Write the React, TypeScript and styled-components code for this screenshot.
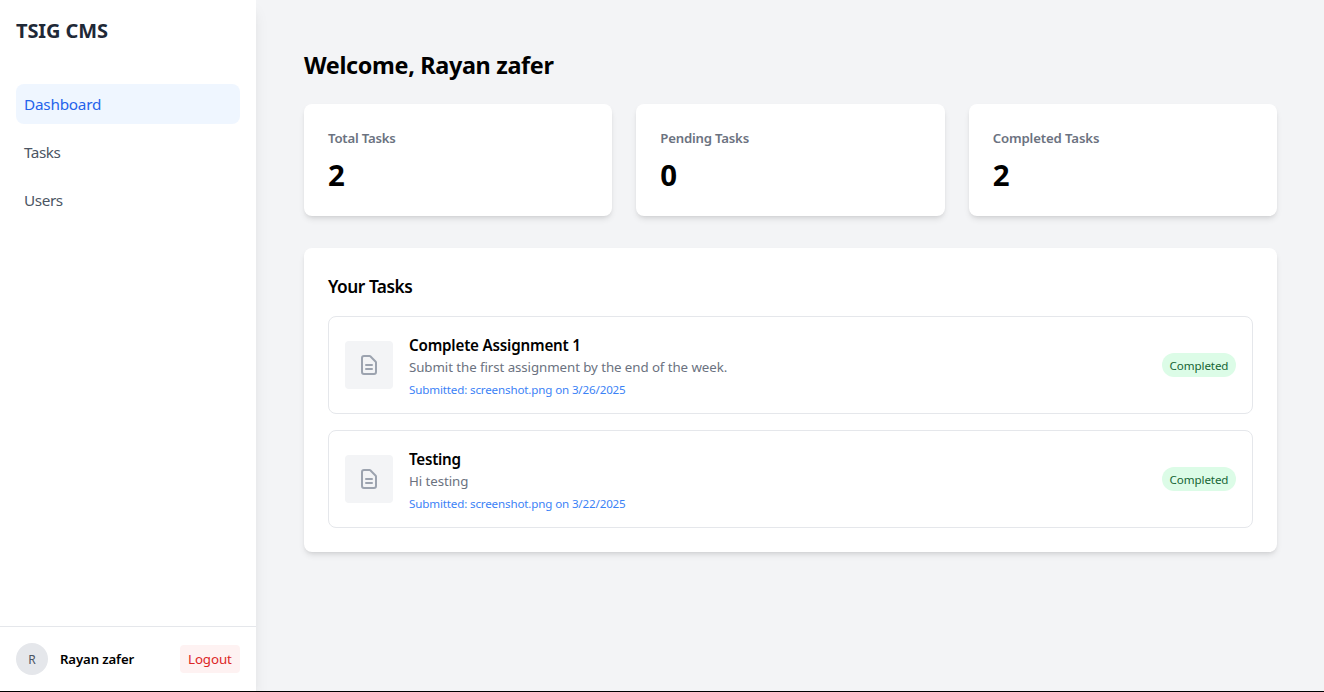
import React from 'react';
import styled, { createGlobalStyle } from 'styled-components';

const GlobalStyle = createGlobalStyle`
  *, *::before, *::after { box-sizing: border-box; }
  body { margin: 0; background: #f3f4f6; overflow: hidden; }
  h1, h2, h3, p { margin: 0; }
  button { border: 0; font: inherit; cursor: pointer; }
`;

const Shell = styled.div`
  display: flex;
  height: 692px;
  border-bottom: 1px solid #000;
  background: #f3f4f6;
  color: #000;
  font-family: 'Segoe UI', 'Noto Sans', sans-serif;
  font-size: 16px;
  font-weight: 400;
  line-height: 24px;
`;

const Sidebar = styled.aside`
  display: flex;
  flex-direction: column;
  flex: 0 0 256px;
  background: #fff;
  box-shadow: 0 10px 15px -3px rgba(0, 0, 0, 0.1), 0 4px 6px -4px rgba(0, 0, 0, 0.1);
`;

const Text = styled.span<{ $track?: number; $drop?: number }>`
  display: block;
  width: max-content;
  padding-top: ${(p) => p.$drop ?? 0}px;
  margin-bottom: -${(p) => p.$drop ?? 0}px;
  white-space: nowrap;
  letter-spacing: ${(p) => p.$track ?? 0}px;
`;

const Brand = styled.h1`
  padding: 17px 16px;
  font-size: 20px;
  font-weight: 700;
  line-height: 28px;
  color: #1f2937;
`;

const Nav = styled.nav`
  display: flex;
  flex: 1;
  flex-direction: column;
  gap: 8px;
  padding: 22px 16px;
`;

const NavLink = styled.a<{ $active?: boolean }>`
  padding: 8px;
  border-radius: 8px;
  background: ${(p) => (p.$active ? '#eff6ff' : 'transparent')};
  color: ${(p) => (p.$active ? '#2563eb' : '#4b5563')};
  font-size: 15.3px;
`;

const Account = styled.footer`
  display: flex;
  align-items: center;
  height: 65px;
  padding: 0 16px;
  border-top: 1px solid #e5e7eb;
  font-size: 13.3px;
  line-height: 20px;
`;

const Avatar = styled.div`
  display: grid;
  place-items: center;
  width: 32px;
  height: 32px;
  margin-right: 12px;
  border-radius: 50%;
  background: #e5e7eb;
  color: #4b5563;
  font-size: 12px;
`;

const UserName = styled.div`
  flex: 1;
  font-size: 13.2px;
  font-weight: 600;
`;

const Logout = styled.button`
  width: 60px;
  height: 28px;
  padding: 4px 8px;
  border-radius: 4px;
  background: #fef2f2;
  color: #dc2626;
`;

const Main = styled.main`
  flex: 1;
  padding: 48px 47px 48px 48px;
`;

const Welcome = styled.h2`
  margin-bottom: 24px;
  font-size: 23.4px;
  font-weight: 700;
  line-height: 32px;
`;

const Stats = styled.section`
  display: grid;
  grid-template-columns: repeat(3, 1fr);
  gap: 24px;
  margin-bottom: 32px;
`;

const Card = styled.div`
  padding: 24px;
  border-radius: 8px;
  background: #fff;
  box-shadow: 0 4px 6px -1px rgba(0, 0, 0, 0.1), 0 2px 4px -2px rgba(0, 0, 0, 0.1);
`;

const StatLabel = styled.h3`
  margin-bottom: 8px;
  color: #6b7280;
  font-size: 13.2px;
  font-weight: 600;
  line-height: 20px;
`;

const StatValue = styled.p`
  font-size: 29.4px;
  font-weight: 700;
  line-height: 36px;
`;

const ListTitle = styled.h2`
  margin-bottom: 16px;
  font-size: 17.3px;
  font-weight: 600;
  line-height: 28px;
`;

const TaskList = styled.div`
  display: flex;
  flex-direction: column;
  gap: 16px;
`;

const TaskRow = styled.article`
  display: flex;
  align-items: center;
  gap: 16px;
  height: 98px;
  padding: 16px;
  border: 1px solid #e5e7eb;
  border-radius: 8px;
`;

const FileTile = styled.div`
  display: grid;
  place-items: center;
  width: 48px;
  height: 48px;
  border-radius: 4px;
  background: #f3f4f6;
  color: #9ca3af;
`;

const TaskBody = styled.div`
  flex: 1;
`;

const TaskTitle = styled.h3`
  font-size: 15.2px;
  font-weight: 600;
  line-height: 24px;
`;

const TaskDetail = styled.p`
  color: #6b7280;
  font-size: 13.3px;
  line-height: 20px;
`;

const Submission = styled.p`
  margin-top: 4px;
  color: #3b82f6;
  font-size: 11.6px;
  line-height: 16px;
`;

const Badge = styled.span`
  display: flex;
  justify-content: center;
  width: 74px;
  padding: 4px 0;
  border-radius: 12px;
  background: #dcfce7;
  color: #166534;
  font-size: 11.6px;
  line-height: 16px;
`;

const stats = [
  { label: 'Total Tasks', value: 2, track: -0.2 },
  { label: 'Pending Tasks', value: 0, track: -0.2 },
  { label: 'Completed Tasks', value: 2, track: -0.13 },
];

const tasks = [
  {
    title: 'Complete Assignment 1',
    titleTrack: -0.2,
    detail: 'Submit the first assignment by the end of the week.',
    date: '3/26/2025',
  },
  { title: 'Testing', titleTrack: -0.27, detail: 'Hi testing', date: '3/22/2025' },
];

const DocumentIcon = () => (
  <svg width="24" height="24" viewBox="0 0 24 24" fill="none" stroke="currentColor" strokeWidth="2" strokeLinecap="round" strokeLinejoin="round">
    <path d="M9 12h6m-6 4h6m2 5H7a2 2 0 01-2-2V5a2 2 0 012-2h5.586a1 1 0 01.707.293l5.414 5.414a1 1 0 01.293.707V19a2 2 0 01-2 2z" />
  </svg>
);

export default function App() {
  return (
    <>
      <GlobalStyle />
      <Shell>
        <Sidebar>
          <Brand><Text $track={-0.12}>TSIG CMS</Text></Brand>
          <Nav>
            <NavLink $active><Text $track={-0.22}>Dashboard</Text></NavLink>
            <NavLink><Text $track={-0.45}>Tasks</Text></NavLink>
            <NavLink><Text $track={-0.4}>Users</Text></NavLink>
          </Nav>
          <Account>
            <Avatar><Text $drop={1}>R</Text></Avatar>
            <UserName><Text $track={-0.12}>Rayan zafer</Text></UserName>
            <Logout><Text $track={-0.07}>Logout</Text></Logout>
          </Account>
        </Sidebar>
        <Main>
          <Welcome><Text $track={-0.34} $drop={1}>Welcome, Rayan zafer</Text></Welcome>
          <Stats>
            {stats.map((s) => (
              <Card key={s.label}>
                <StatLabel><Text $track={s.track}>{s.label}</Text></StatLabel>
                <StatValue><Text $drop={1}>{s.value}</Text></StatValue>
              </Card>
            ))}
          </Stats>
          <Card>
            <ListTitle><Text $track={-0.47} $drop={1}>Your Tasks</Text></ListTitle>
            <TaskList>
              {tasks.map((t) => (
                <TaskRow key={t.title}>
                  <FileTile><DocumentIcon /></FileTile>
                  <TaskBody>
                    <TaskTitle><Text $track={t.titleTrack}>{t.title}</Text></TaskTitle>
                    <TaskDetail><Text $track={-0.075}>{t.detail}</Text></TaskDetail>
                    <Submission><Text $track={-0.15} $drop={1}>Submitted: screenshot.png on {t.date}</Text></Submission>
                  </TaskBody>
                  <Badge><Text $track={-0.1} $drop={1}>Completed</Text></Badge>
                </TaskRow>
              ))}
            </TaskList>
          </Card>
        </Main>
      </Shell>
    </>
  );
}
